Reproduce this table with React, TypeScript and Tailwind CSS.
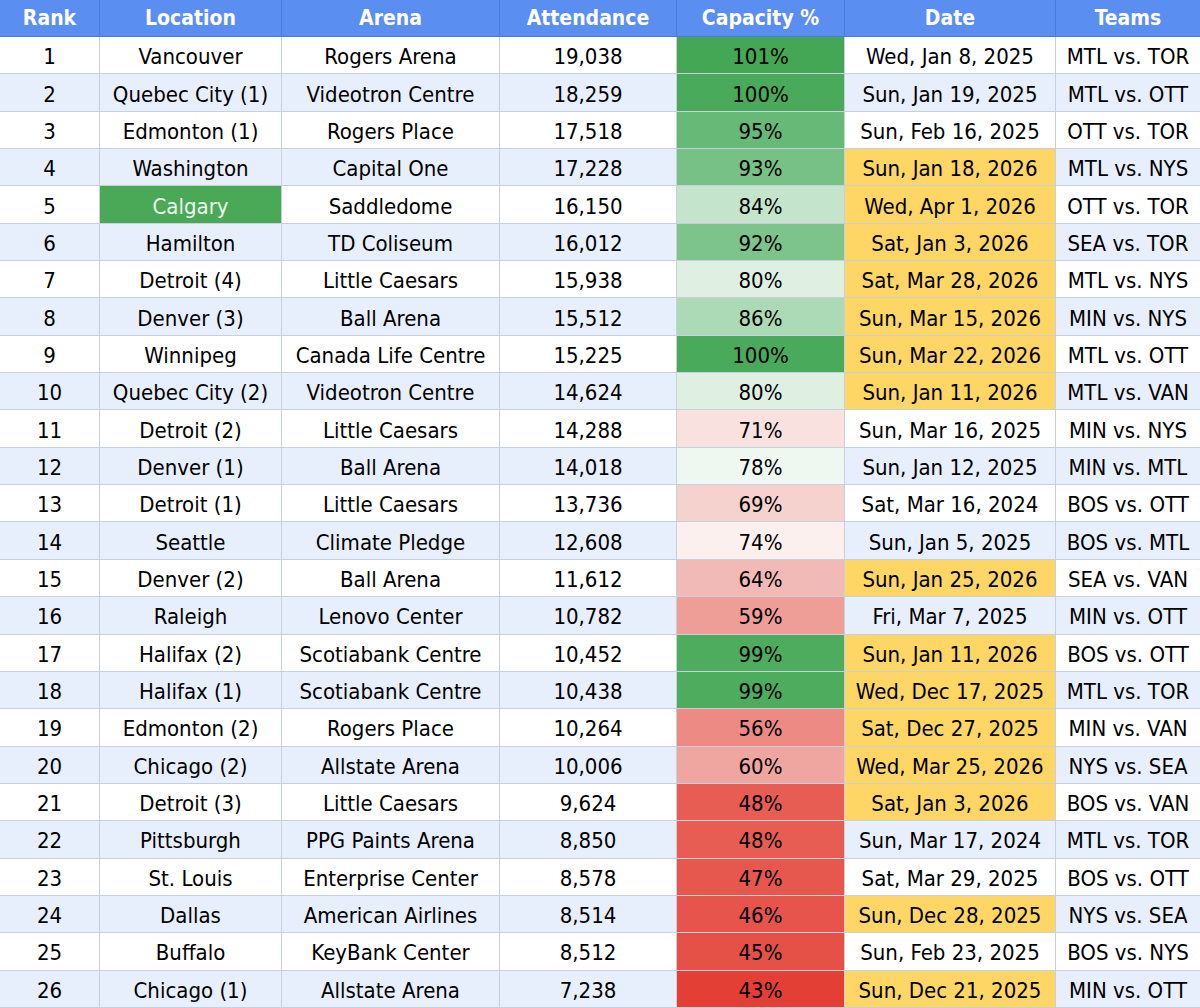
import React from "react";

type Row = {
  rank: number;
  location: string;
  arena: string;
  attendance: string;
  capacity: number;
  date: string;
  teams: string;
  highlight?: boolean;
};

const rows: Row[] = [
  { rank: 1, location: "Vancouver", arena: "Rogers Arena", attendance: "19,038", capacity: 101, date: "Wed, Jan 8, 2025", teams: "MTL vs. TOR" },
  { rank: 2, location: "Quebec City (1)", arena: "Videotron Centre", attendance: "18,259", capacity: 100, date: "Sun, Jan 19, 2025", teams: "MTL vs. OTT" },
  { rank: 3, location: "Edmonton (1)", arena: "Rogers Place", attendance: "17,518", capacity: 95, date: "Sun, Feb 16, 2025", teams: "OTT vs. TOR" },
  { rank: 4, location: "Washington", arena: "Capital One", attendance: "17,228", capacity: 93, date: "Sun, Jan 18, 2026", teams: "MTL vs. NYS", highlight: true },
  { rank: 5, location: "Calgary", arena: "Saddledome", attendance: "16,150", capacity: 84, date: "Wed, Apr 1, 2026", teams: "OTT vs. TOR", highlight: true },
  { rank: 6, location: "Hamilton", arena: "TD Coliseum", attendance: "16,012", capacity: 92, date: "Sat, Jan 3, 2026", teams: "SEA vs. TOR", highlight: true },
  { rank: 7, location: "Detroit (4)", arena: "Little Caesars", attendance: "15,938", capacity: 80, date: "Sat, Mar 28, 2026", teams: "MTL vs. NYS", highlight: true },
  { rank: 8, location: "Denver (3)", arena: "Ball Arena", attendance: "15,512", capacity: 86, date: "Sun, Mar 15, 2026", teams: "MIN vs. NYS", highlight: true },
  { rank: 9, location: "Winnipeg", arena: "Canada Life Centre", attendance: "15,225", capacity: 100, date: "Sun, Mar 22, 2026", teams: "MTL vs. OTT", highlight: true },
  { rank: 10, location: "Quebec City (2)", arena: "Videotron Centre", attendance: "14,624", capacity: 80, date: "Sun, Jan 11, 2026", teams: "MTL vs. VAN", highlight: true },
  { rank: 11, location: "Detroit (2)", arena: "Little Caesars", attendance: "14,288", capacity: 71, date: "Sun, Mar 16, 2025", teams: "MIN vs. NYS" },
  { rank: 12, location: "Denver (1)", arena: "Ball Arena", attendance: "14,018", capacity: 78, date: "Sun, Jan 12, 2025", teams: "MIN vs. MTL" },
  { rank: 13, location: "Detroit (1)", arena: "Little Caesars", attendance: "13,736", capacity: 69, date: "Sat, Mar 16, 2024", teams: "BOS vs. OTT" },
  { rank: 14, location: "Seattle", arena: "Climate Pledge", attendance: "12,608", capacity: 74, date: "Sun, Jan 5, 2025", teams: "BOS vs. MTL" },
  { rank: 15, location: "Denver (2)", arena: "Ball Arena", attendance: "11,612", capacity: 64, date: "Sun, Jan 25, 2026", teams: "SEA vs. VAN", highlight: true },
  { rank: 16, location: "Raleigh", arena: "Lenovo Center", attendance: "10,782", capacity: 59, date: "Fri, Mar 7, 2025", teams: "MIN vs. OTT" },
  { rank: 17, location: "Halifax (2)", arena: "Scotiabank Centre", attendance: "10,452", capacity: 99, date: "Sun, Jan 11, 2026", teams: "BOS vs. OTT", highlight: true },
  { rank: 18, location: "Halifax (1)", arena: "Scotiabank Centre", attendance: "10,438", capacity: 99, date: "Wed, Dec 17, 2025", teams: "MTL vs. TOR", highlight: true },
  { rank: 19, location: "Edmonton (2)", arena: "Rogers Place", attendance: "10,264", capacity: 56, date: "Sat, Dec 27, 2025", teams: "MIN vs. VAN", highlight: true },
  { rank: 20, location: "Chicago (2)", arena: "Allstate Arena", attendance: "10,006", capacity: 60, date: "Wed, Mar 25, 2026", teams: "NYS vs. SEA", highlight: true },
  { rank: 21, location: "Detroit (3)", arena: "Little Caesars", attendance: "9,624", capacity: 48, date: "Sat, Jan 3, 2026", teams: "BOS vs. VAN", highlight: true },
  { rank: 22, location: "Pittsburgh", arena: "PPG Paints Arena", attendance: "8,850", capacity: 48, date: "Sun, Mar 17, 2024", teams: "MTL vs. TOR" },
  { rank: 23, location: "St. Louis", arena: "Enterprise Center", attendance: "8,578", capacity: 47, date: "Sat, Mar 29, 2025", teams: "BOS vs. OTT" },
  { rank: 24, location: "Dallas", arena: "American Airlines", attendance: "8,514", capacity: 46, date: "Sun, Dec 28, 2025", teams: "NYS vs. SEA", highlight: true },
  { rank: 25, location: "Buffalo", arena: "KeyBank Center", attendance: "8,512", capacity: 45, date: "Sun, Feb 23, 2025", teams: "BOS vs. NYS" },
  { rank: 26, location: "Chicago (1)", arena: "Allstate Arena", attendance: "7,238", capacity: 43, date: "Sun, Dec 21, 2025", teams: "MIN vs. OTT", highlight: true },
];

// colour scale, written out per value
const capacityColor: Record<number, string> = {
  101: "bg-[#44a756]",
  100: "bg-[#4aaa5b]",
  99: "bg-[#4dac5e]",
  95: "bg-[#66b977]",
  93: "bg-[#77c187]",
  92: "bg-[#7cc38c]",
  86: "bg-[#acdab6]",
  84: "bg-[#c4e5cb]",
  80: "bg-[#dff0e3]",
  78: "bg-[#eef7f0]",
  74: "bg-[#fcf0ef]",
  71: "bg-[#f9e1df]",
  69: "bg-[#f6d2cf]",
  64: "bg-[#f2bab6]",
  60: "bg-[#efa6a1]",
  59: "bg-[#ef9d97]",
  56: "bg-[#ed8a83]",
  48: "bg-[#e75c53]",
  47: "bg-[#e6574e]",
  46: "bg-[#e6544b]",
  45: "bg-[#e55047]",
  43: "bg-[#e43f35]",
};

const headers = ["Rank", "Location", "Arena", "Attendance", "Capacity %", "Date", "Teams"];
const cols = "grid grid-cols-[100px_182px_218px_177px_168px_211px_144px]";

export default function App() {
  return (
    <div
      className="w-[1200px] h-[1008px] flex flex-col bg-white text-black text-[22px]"
      style={{ fontFamily: '"DejaVu Sans Condensed", "DejaVu Sans", sans-serif' }}
    >
      <div className={`${cols} h-[37px] shrink-0 bg-[#5a8ef0] border-b border-[#4a7bd6]`}>
        {headers.map((h, i) => (
          <div
            key={h}
            className={`flex items-center justify-center pt-[2px] text-[21px] font-bold text-white ${i < 6 ? "border-r border-[#4a7bd6]" : ""}`}
          >
            {h}
          </div>
        ))}
      </div>

      {rows.map((r) => {
        const base = r.rank % 2 === 0 ? "bg-[#e8effc]" : "bg-white";
        const cell = "flex items-center justify-center pt-[3px] border-r border-b border-[#c8d0dc] whitespace-nowrap";
        return (
          <div key={r.rank} className={`${cols} flex-1`}>
            <div className={`${cell} ${base}`}>{r.rank}</div>
            <div className={`${cell} ${r.location === "Calgary" ? "bg-[#4aa957] text-[#eef7ee]" : base}`}>
              {r.location}
            </div>
            <div className={`${cell} ${base}`}>{r.arena}</div>
            <div className={`${cell} ${base}`}>{r.attendance}</div>
            <div className={`${cell} ${capacityColor[r.capacity]}`}>{r.capacity}%</div>
            <div className={`${cell} ${r.highlight ? "bg-[#fdd666]" : base}`}>{r.date}</div>
            <div className={`${cell} border-r-0 ${base}`}>{r.teams}</div>
          </div>
        );
      })}
    </div>
  );
}
